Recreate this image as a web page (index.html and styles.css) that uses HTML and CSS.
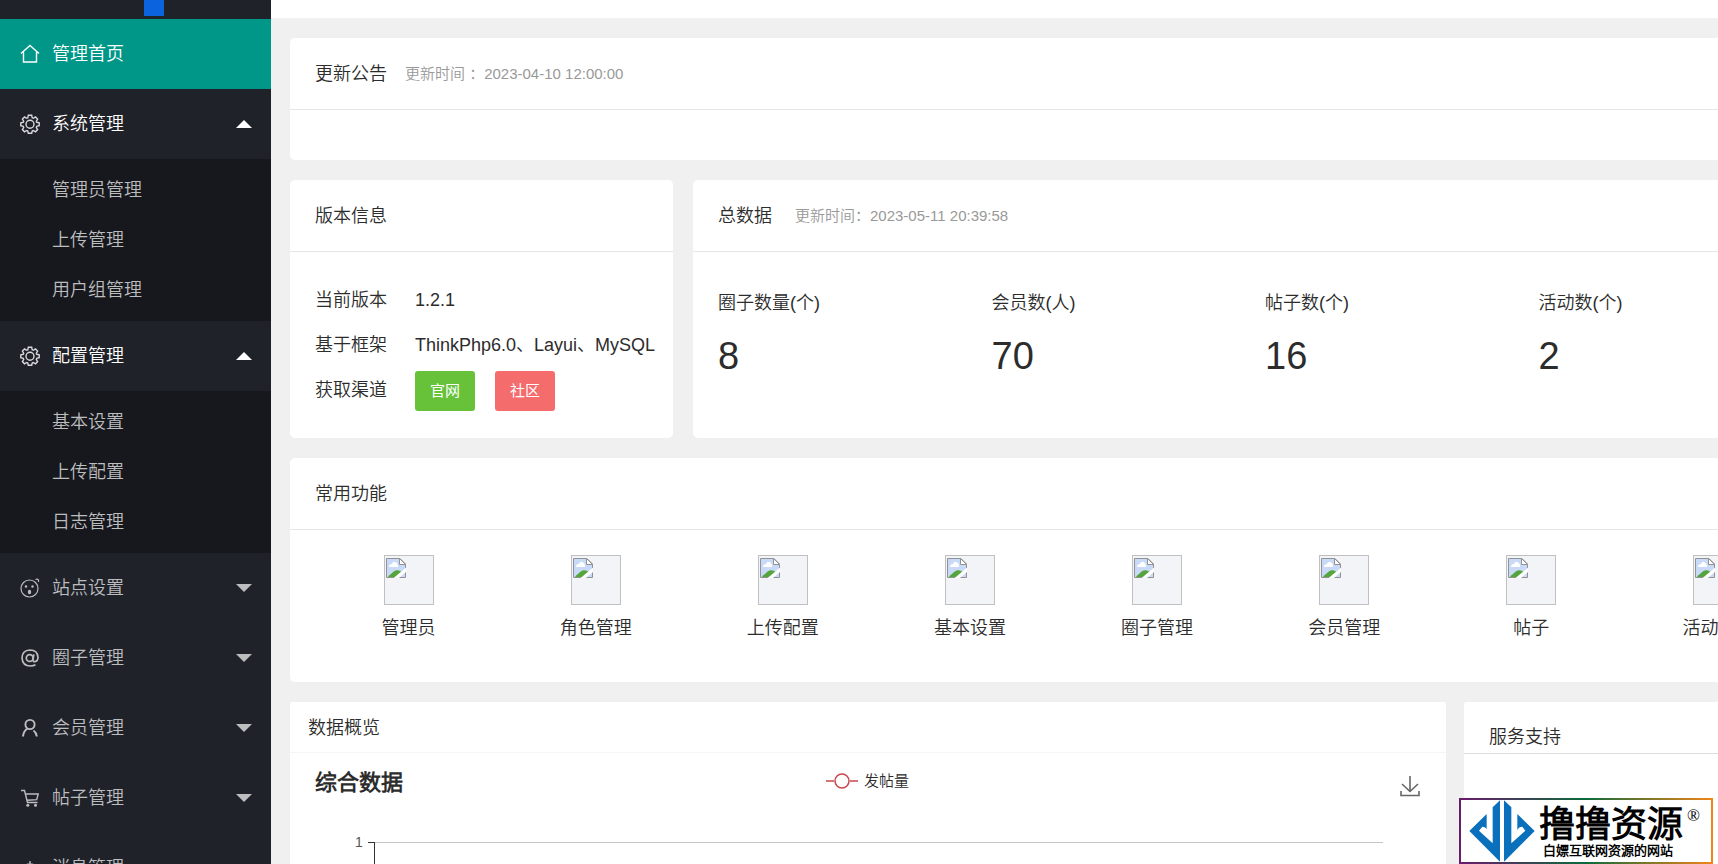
FILE: index.html
```html
<!DOCTYPE html>
<html lang="zh-CN">
<head>
<meta charset="utf-8">
<title>管理首页</title>
<link rel="stylesheet" href="styles.css">
</head>
<body>
<svg class="defs" aria-hidden="true">
  <symbol id="gear" viewBox="0 0 20 20">
    <path d="M8.300 1.300h3.400l.5 2.500 1.100.5 2.200-1.400 2.100 2.100-1.300 2.200.5 1.100 2.400.5v3.000l-2.400.5-.5 1.200 1.300 2.100-2.100 2.200-2.200-1.300-1.100.5-.5 2.300H8.300l-.5-2.300-1.100-.5-2.200 1.300-2.100-2.200 1.300-2.100-.5-1.200-2.400-.5V8.800l2.400-.5.5-1.100-1.300-2.200 2.100-2.100 2.200 1.400 1.100-.5z"/>
    <circle cx="10" cy="10.200" r="4"/>
  </symbol>
  <symbol id="broken" viewBox="0 0 20 20">
    <path d="M.5.500h13.500l5.500 5.500v13.500H.5z" fill="#c9d9f8" stroke="#929292"/>
    <path d="M3 9q0-3 3-3 1-3 3.500-2T12 8v1z" fill="#fff"/>
    <path d="M2 19q1-2 3-3 4-5 8-3.500l3 1.500-6 5z" fill="#55a53c"/>
    <path d="M13.500.500v6h6z" fill="#fff" stroke="#929292"/>
    <path d="M9 21 21 11" stroke="#fff" stroke-width="3.500"/>
  </symbol>
</svg>
<div class="layout">
  <aside class="sidebar">
    <div class="brand"><span class="brand-mark"></span></div>
    <nav>
      <a class="item active" href="#"><svg class="icon" viewBox="0 0 20 20"><path d="M1 9.500 10 1.500l9 8M3.500 8v10h13V8"/></svg><span>管理首页</span></a>
      <a class="item open" href="#"><svg class="icon"><use href="#gear"/></svg><span>系统管理</span><i class="caret up"></i></a>
      <div class="submenu">
        <a href="#">管理员管理</a>
        <a href="#">上传管理</a>
        <a href="#">用户组管理</a>
      </div>
      <a class="item open" href="#"><svg class="icon"><use href="#gear"/></svg><span>配置管理</span><i class="caret up"></i></a>
      <div class="submenu">
        <a href="#">基本设置</a>
        <a href="#">上传配置</a>
        <a href="#">日志管理</a>
      </div>
      <a class="item" href="#"><svg class="icon" viewBox="0 0 20 20"><g stroke-width="1.200"><circle cx="9.500" cy="10.500" r="8.500"/><path d="M15.500 1.500q2-1 3 .5v2"/></g><g fill="currentColor" stroke="none"><circle cx="6" cy="8.500" r="1.200"/><circle cx="12.500" cy="8.500" r="1.200"/><ellipse cx="9.500" cy="14" rx="1.700" ry="2.300"/></g></svg><span>站点设置</span><i class="caret"></i></a>
      <a class="item" href="#"><svg class="icon" viewBox="0 0 20 20"><g stroke-width="1.700"><circle cx="9.700" cy="10" r="3.400"/><path d="M13.800 6.300 13 11.500q-.2 2.200 1.700 2.200 3.300-.5 3.300-4.500Q17.500 2 10 2 2 2.500 2 10q.5 8 8.500 8 3 0 5-1.300"/></g></svg><span>圈子管理</span><i class="caret"></i></a>
      <a class="item" href="#"><svg class="icon" viewBox="0 0 20 20"><g stroke-width="1.900"><circle cx="10" cy="6.500" r="4.600"/><path d="M7.500 10.500Q3.500 13 3 18.500M13.500 12.500q2.800 2 3.300 6"/></g></svg><span>会员管理</span><i class="caret"></i></a>
      <a class="item" href="#"><svg class="icon" viewBox="0 0 20 20"><path d="M1 2.500h3.500l3 12h10M5.500 6h12.700l-1.500 5.700-9.700.5"/><g fill="currentColor" stroke="none"><circle cx="7.800" cy="17.300" r="1.500"/><circle cx="15.500" cy="17.300" r="1.500"/></g></svg><span>帖子管理</span><i class="caret"></i></a>
      <a class="item" href="#"><svg class="icon" viewBox="0 0 20 20"><path d="M10 3V6M4 17v-6q0-5 6-5t6 5v6zM8 19h4"/></svg><span>消息管理</span><i class="caret"></i></a>
    </nav>
  </aside>
  <main class="main">
    <header class="topbar"></header>
    <div class="content">
      <section class="card">
        <header class="card-head"><h2>更新公告</h2><span class="time">更新时间 ：2023-04-10 12:00:00</span></header>
        <div class="notice"></div>
      </section>
      <div class="row-info">
        <section class="card">
          <header class="card-head"><h2>版本信息</h2></header>
          <dl class="version">
            <dt>当前版本</dt><dd>1.2.1</dd>
            <dt>基于框架</dt><dd>ThinkPhp6.0、Layui、MySQL</dd>
            <dt>获取渠道</dt><dd><button class="btn green" type="button">官网</button><button class="btn red" type="button">社区</button></dd>
          </dl>
        </section>
        <section class="card">
          <header class="card-head wide"><h2>总数据</h2><span class="time">更新时间：2023-05-11 20:39:58</span></header>
          <div class="stats">
            <div><p>圈子数量(个)</p><strong>8</strong></div>
            <div><p>会员数(人)</p><strong>70</strong></div>
            <div><p>帖子数(个)</p><strong>16</strong></div>
            <div><p>活动数(个)</p><strong>2</strong></div>
          </div>
        </section>
      </div>
      <section class="card">
        <header class="card-head"><h2>常用功能</h2></header>
        <div class="shortcuts">
          <a href="#"><span class="pic"><svg><use href="#broken"/></svg></span>管理员</a>
          <a href="#"><span class="pic"><svg><use href="#broken"/></svg></span>角色管理</a>
          <a href="#"><span class="pic"><svg><use href="#broken"/></svg></span>上传配置</a>
          <a href="#"><span class="pic"><svg><use href="#broken"/></svg></span>基本设置</a>
          <a href="#"><span class="pic"><svg><use href="#broken"/></svg></span>圈子管理</a>
          <a href="#"><span class="pic"><svg><use href="#broken"/></svg></span>会员管理</a>
          <a href="#"><span class="pic"><svg><use href="#broken"/></svg></span>帖子</a>
          <a href="#"><span class="pic"><svg><use href="#broken"/></svg></span>活动管理</a>
        </div>
      </section>
      <div class="row-data">
        <section class="card flat">
          <header class="data-head"><h2>数据概览</h2></header>
          <div class="chart-head">
            <h3>综合数据</h3>
            <span class="legend"><svg viewBox="0 0 32 18"><path d="M0 9h8M24 9h8"/><circle cx="16" cy="9" r="7"/></svg>发帖量</span>
            <button class="save" type="button" aria-label="保存为图片"><svg viewBox="0 0 20 22"><path d="M10 1v15M2 9l8 7.500L18 9M1 16v4.500h18V16"/></svg></button>
          </div>
          <div class="chart-body"><span class="tick">1</span><div class="plot"></div></div>
        </section>
        <section class="card flat">
          <header class="support-head"><h2>服务支持</h2></header>
        </section>
      </div>
    </div>
  </main>
</div>
<a class="badge" href="#">
  <svg viewBox="327 332 198 186"><path d="M420 333 398 354V462L357 424 367 412Q377 412 380 420V374L328 425 420 517zM432 333 454 354V462L496 424 487 412Q476 412 472 422V374L524 425 432 517z"/></svg>
  <span class="badge-text"><span class="badge-name">撸撸资源</span><span class="badge-line">白嫖互联网资源的网站</span></span>
  <span class="reg">®</span>
</a>
</body>
</html>
```

FILE: styles.css
```css
* { box-sizing: border-box; }
body {
  margin: 0;
  height: 100vh;
  overflow: hidden;
  background: #f0f0f0;
  color: #2c2c2c;
  font: 350 18px/30px "Liberation Sans", "Noto Sans CJK SC DemiLight", "Noto Sans CJK SC", sans-serif;
}
h2, h3, p, dl, dd { margin: 0; }
h2 { font-size: 18px; font-weight: 350; }
a { color: inherit; text-decoration: none; }
svg { fill: none; stroke: currentColor; }
.defs { position: absolute; width: 0; height: 0; }
.layout { display: flex; height: 100%; }

.sidebar {
  flex: 0 0 271px;
  overflow: hidden;
  background: #20222a;
  color: #bcbdbf;
}
.brand { height: 19px; padding-left: 144px; }
.brand-mark { display: block; width: 20px; height: 16px; background: #0b63dd; }
.item {
  display: flex;
  align-items: center;
  height: 70px;
  padding: 0 19px 0 20px;
}
.item .icon { width: 20px; height: 20px; margin-right: 12px; stroke-width: 1.4; }
.item.active { background: #009688; color: #fff; }
.item.open { color: #fff; font-weight: 400; }
.item.open .icon { color: #d8d9db; }
.caret {
  margin-left: auto;
  border: 8px solid transparent;
  border-top-color: currentColor;
  border-bottom: 0;
}
.caret.up { border-top: 0; border-bottom: 8px solid currentColor; }
.submenu { padding: 6px 0; background: #17181d; }
.submenu a { display: block; padding-left: 52px; line-height: 50px; }

.main { flex: 1; min-width: 0; overflow: hidden; }
.topbar { height: 19px; background: #fff; border-bottom: 1px solid #f2f2f2; }
/* The dashboard is wider than the visible pane and runs past its right edge. */
.content {
  display: flex;
  flex-direction: column;
  gap: 20px;
  margin: 19px -119px 0 19px;
}
.card { background: #fff; border-radius: 5px; }
.flat { border-radius: 2px; }
.card-head {
  display: flex;
  align-items: center;
  gap: 18px;
  height: 72px;
  padding: 0 25px;
  border-bottom: 1px solid #e6e6e6;
}
.card-head.wide { gap: 23px; }
.time { color: #999; font-size: 15px; }
.notice { height: 50px; }

.row-info { display: grid; grid-template-columns: 383px 1fr; gap: 20px; }
.version {
  display: grid;
  grid-template-columns: 100px 1fr;
  padding: 26px 0 25px 25px;
  line-height: 45px;
}
.version dd { display: flex; align-items: center; gap: 20px; white-space: nowrap; }
.btn {
  width: 60px;
  height: 40px;
  padding: 0;
  border: 0;
  border-radius: 3px;
  color: #fff;
  font: 400 15px/40px "Liberation Sans", "Noto Sans CJK SC", sans-serif;
}
.green { background: #67c23a; }
.red { background: #f56c6c; }
.stats { display: grid; grid-template-columns: repeat(4, 1fr); padding: 36px 25px 35px; }
.stats strong { display: block; margin-top: 16px; font-size: 38px; line-height: 44px; font-weight: 400; }

.shortcuts { display: grid; grid-template-columns: repeat(8, 1fr); padding: 25px 25px 39px; }
.shortcuts a { display: flex; flex-direction: column; align-items: center; gap: 8px; }
.pic { width: 50px; height: 50px; padding: 2px 1px; border: 1px solid #c0c0c0; background: #f2f4f7; }
.pic svg { display: block; width: 20px; height: 20px; stroke: none; }

.row-data { display: grid; grid-template-columns: 1fr 373px; gap: 18px; }
.data-head { padding: 11px 18px 9px; border-bottom: 1px solid #f6f6f6; }
.chart-head {
  display: grid;
  grid-template-columns: 1fr auto 1fr;
  align-items: center;
  height: 60px;
  padding: 0 26px 0 25px;
}
.chart-head h3 { font-size: 22px; font-weight: 700; }
.legend { display: flex; align-items: center; gap: 6px; padding-bottom: 4px; font-size: 15px; }
.legend svg { width: 32px; height: 18px; stroke: #c9474f; stroke-width: 1.5; }
.save { justify-self: end; padding: 6px 0 0; border: 0; background: none; color: #666; }
.save svg { display: block; width: 20px; height: 22px; stroke-width: 1.6; }
.chart-body { display: flex; padding: 29px 63px 0 65px; font-size: 14px; }
.tick { width: 19px; color: #555; line-height: 1px; }
.plot { position: relative; flex: 1; height: 300px; border-top: 1px solid #c4c4c4; border-left: 1px solid #333; }
.plot::before { content: ""; position: absolute; top: -1px; left: -7px; width: 7px; height: 1px; background: #333; }
.support-head { padding: 20px 25px 1px; border-bottom: 1px solid #dedede; }

.badge {
  position: fixed;
  right: 5px;
  bottom: 0;
  display: flex;
  width: 254px;
  height: 66px;
  padding-left: 8px;
  border: 2px solid;
  border-image: linear-gradient(90deg, #6a1b6e, #0b6b3a 50%, #f08519) 1;
  background: #fff;
  color: #000;
}
.badge svg { flex: none; width: 66px; height: 62px; fill: #0b70bb; stroke: none; }
.badge-text { display: flex; flex-direction: column; padding: 7px 0 0 4px; white-space: nowrap; }
.badge-name { font-size: 36px; line-height: 36px; font-weight: 900; font-style: oblique 6deg; }
.badge-line { padding-left: 4px; font-size: 13px; line-height: 16px; font-weight: 900; font-style: oblique 6deg; }
.reg { padding-left: 4px; font: 400 17px/32px "Liberation Serif", serif; }
```
